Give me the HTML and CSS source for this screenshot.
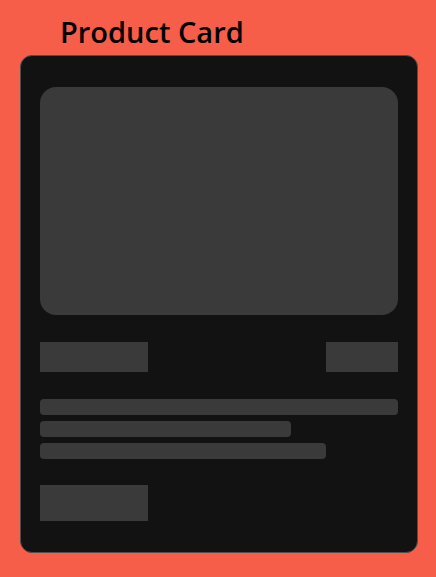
FILE: index.html
```html
<!DOCTYPE html>
<html lang="en">
<head>
	<meta charset="UTF-8">
	<title>Product Card</title>
	<link rel="stylesheet" href="styles.css">
</head>
<body>
	<h1 class="title">Product Card</h1>
	<div class="card">
		<div class="thumb"></div>
		<div class="price-row">
			<span class="name"></span>
			<span class="price"></span>
		</div>
		<div class="lines">
			<span class="line full"></span>
			<span class="line short"></span>
			<span class="line mid"></span>
		</div>
		<span class="btn"></span>
	</div>
</body>
</html>
```
FILE: styles.css
```css
*{
	margin:0;
	padding:0;
	box-sizing:border-box;
}
body{
	background:#f65e4a;
	padding:0 20px;
	font-family:"Open Sans","DejaVu Sans",sans-serif;
}
.title{
	font-size:29px;
	font-weight:600;
	color:#000;
	line-height:30px;
	padding:17px 0 0 40px;
	height:55px;
}
.card{
	width:398px;
	height:498px;
	background:#121212;
	border:1px solid #4e4e4e;
	border-radius:12px;
	padding:31px 19px;
	display:flex;
	flex-direction:column;
}
.thumb{
	height:228px;
	background:#3a3a3a;
	border-radius:16px;
}
.price-row{
	display:flex;
	justify-content:space-between;
	margin-top:27px;
}
.price-row span{
	display:block;
	height:30px;
	background:#3a3a3a;
}
.name{ width:108px;}
.price{ width:72px;}
.lines{
	display:flex;
	flex-direction:column;
	gap:6px;
	margin-top:27px;
}
.line{
	display:block;
	height:16px;
	background:#3a3a3a;
	border-radius:4px;
}
.full{ width:100%;}
.short{ width:251px;}
.mid{ width:286px;}
.btn{
	display:block;
	width:108px;
	height:36px;
	background:#3a3a3a;
	margin-top:26px;
}
```
